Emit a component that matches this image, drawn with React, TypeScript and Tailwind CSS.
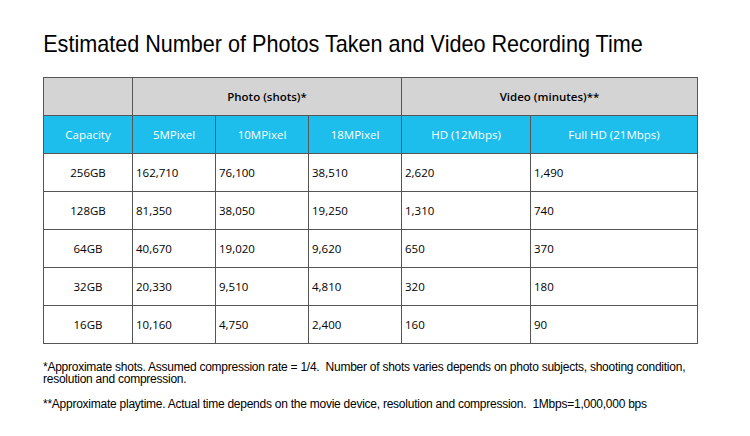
const rows = [
  ["256GB", "162,710", "76,100", "38,510", "2,620", "1,490"],
  ["128GB", "81,350", "38,050", "19,250", "1,310", "740"],
  ["64GB", "40,670", "19,020", "9,620", "650", "370"],
  ["32GB", "20,330", "9,510", "4,810", "320", "180"],
  ["16GB", "10,160", "4,750", "2,400", "160", "90"],
];

const subHeads = ["Capacity", "5MPixel", "10MPixel", "18MPixel", "HD (12Mbps)", "Full HD (21Mbps)"];

export default function App() {
  return (
    <div className="h-[436px] w-[750px] overflow-hidden bg-white text-black">
      <h1 className="origin-left scale-x-[0.9] whitespace-nowrap pl-[48px] pt-[30px] font-['Liberation_Sans',Arial,sans-serif] text-[24px] leading-[28px]">
        Estimated Number of Photos Taken and Video Recording Time
      </h1>

      <table className="ml-[43px] mt-[19px] border-collapse font-['Open_Sans',sans-serif] text-[11.5px]">
        <colgroup>
          <col className="w-[89px]" />
          <col className="w-[83px]" />
          <col className="w-[93px]" />
          <col className="w-[93px]" />
          <col className="w-[129px]" />
          <col className="w-[167px]" />
        </colgroup>
        <thead>
          <tr className="h-[38px] bg-[#d4d4d4]">
            <th className="border border-[#555]" />
            <th colSpan={3} className="border border-[#555] font-semibold">
              Photo (shots)*
            </th>
            <th colSpan={2} className="border border-[#555] font-semibold">
              Video (minutes)**
            </th>
          </tr>
          <tr className="h-[38px] bg-[#1dbdec] text-white">
            {subHeads.map((h) => (
              <th key={h} className="border border-[#555] font-normal">
                {h}
              </th>
            ))}
          </tr>
        </thead>
        <tbody>
          {rows.map((r) => (
            <tr key={r[0]} className="h-[38px]">
              {r.map((c, i) => (
                <td
                  key={i}
                  className={i === 0 ? "border border-[#555] text-center" : "border border-[#555] px-[3px]"}
                >
                  {c}
                </td>
              ))}
            </tr>
          ))}
        </tbody>
      </table>

      <div className="ml-[43px] mt-[17px] w-[680px] font-['Liberation_Sans',Arial,sans-serif] text-[12px] leading-[12px] tracking-[-0.25px]">
        <p>
          *Approximate shots. Assumed compression rate = 1/4.&nbsp; Number of shots varies depends on photo subjects,
          shooting condition, resolution and compression.
        </p>
        <p className="mt-[13px]">
          **Approximate playtime. Actual time depends on the movie device, resolution and compression.&nbsp;
          1Mbps=1,000,000 bps
        </p>
      </div>
    </div>
  );
}
